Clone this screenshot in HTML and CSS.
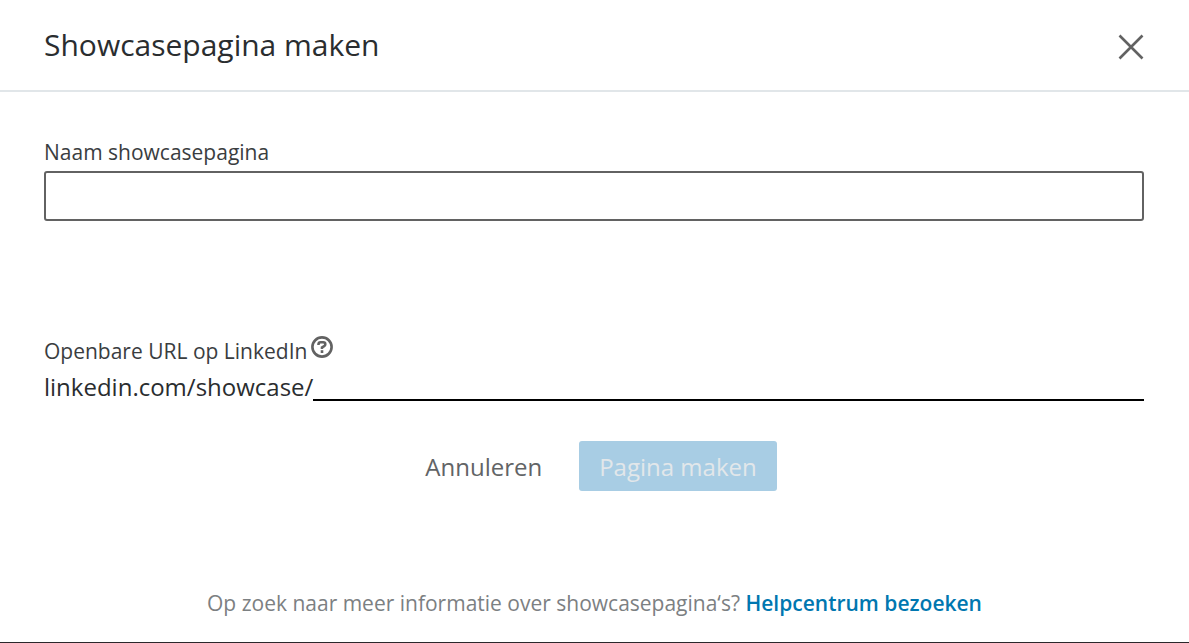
FILE: index.html
```html
<!DOCTYPE html>
<html lang="nl">
<head>
<meta charset="utf-8">
<meta name="viewport" content="width=device-width, initial-scale=1">
<title>Showcasepagina maken</title>
<link rel="stylesheet" href="styles.css">
</head>
<body>
<main class="dialog">
  <header class="dialog-header">
    <h1 class="dialog-title">Showcasepagina maken</h1>
    <button class="close" type="button" aria-label="Sluiten">
      <svg class="close-icon" viewBox="0 0 26 26" aria-hidden="true"><path d="M1.5 1.5 24.5 24.5M24.5 1.5 1.5 24.5"/></svg>
    </button>
  </header>
  <form class="form">
    <label class="label" for="name">Naam showcasepagina</label>
    <input class="name-input" id="name" type="text">
    <div class="url-label">
      <label class="label" for="url">Openbare URL op LinkedIn</label>
      <button class="help" type="button" aria-label="Hulp">
        <svg class="help-icon" viewBox="0 0 22 22" aria-hidden="true"><circle cx="11" cy="11" r="9.6"/><path d="M7.5 9V8.3Q7.5 6.2 9.6 6.2H12.2Q14.3 6.2 14.3 8.2Q14.3 9.5 13.2 10.1L11 11.4V13"/><path d="M11 14.2V17"/></svg>
      </button>
    </div>
    <div class="url-row">
      <label class="url-prefix" for="url">linkedin.com/showcase/</label>
      <input class="url-input" id="url" type="text">
    </div>
    <div class="actions">
      <button class="button" type="button">Annuleren</button>
      <button class="button button-primary" type="submit" disabled>Pagina maken</button>
    </div>
  </form>
  <footer class="footer">Op zoek naar meer informatie over showcasepagina‘s? <a class="footer-link" href="#">Helpcentrum bezoeken</a></footer>
</main>
</body>
</html>
```
FILE: styles.css
```css
* { box-sizing: border-box; }

body {
  margin: 0;
  background: #fff;
  color: #2a2d2f;
  font-family: "Segoe UI", "Open Sans", "Noto Sans", sans-serif;
}

.dialog {
  display: flex;
  flex-direction: column;
  min-height: 100vh;
  border-bottom: 1px solid #2b282b;
}

.dialog-header {
  display: flex;
  align-items: center;
  justify-content: space-between;
  padding: 21px 45px 21px 44px;
  border-bottom: 2px solid #e1e6e9;
}

.dialog-title {
  margin: 0;
  font-size: 30px;
  font-weight: 400;
  line-height: 48px;
}

.close,
.help {
  display: flex;
  padding: 0;
  border: 0;
  background: none;
  cursor: pointer;
}

.close {
  padding-top: 4px;
}

.close-icon {
  width: 26px;
  height: 26px;
  fill: none;
  stroke: #626262;
  stroke-width: 2.6;
}

.form {
  display: flex;
  flex-direction: column;
  padding: 44px 45px 0 44px;
}

.label {
  color: #3a3d3f;
  font-size: 21px;
  line-height: 32px;
}

.name-input {
  width: 100%;
  height: 50px;
  margin-top: 3px;
  padding: 0 12px;
  border: 2px solid #626262;
  border-radius: 3px;
  font: inherit;
  font-size: 24px;
}

.url-label {
  display: flex;
  align-items: flex-start;
  gap: 4px;
  margin-top: 114px;
}

.help {
  padding-top: 1px;
}

.help-icon {
  width: 22px;
  height: 22px;
  fill: none;
  stroke: #626262;
  stroke-width: 2.6;
}

.url-row {
  display: flex;
  height: 34px;
}

.url-prefix {
  font-size: 24px;
  line-height: 40px;
}

.url-input {
  flex: 1;
  min-width: 0;
  padding: 0;
  border: 0;
  border-bottom: 2px solid #000;
  background: none;
  font: inherit;
  font-size: 24px;
}

.actions {
  display: flex;
  justify-content: center;
  gap: 17px;
  margin-top: 40px;
  padding-right: 6px;
}

.button {
  height: 50px;
  padding: 0 20px;
  border: 0;
  border-radius: 3px;
  background: none;
  color: #626466;
  font: inherit;
  font-size: 24px;
  font-weight: 500;
}

.button-primary {
  background: #a8cde4;
  color: #e2e7ea;
}

.footer {
  margin-top: auto;
  padding: 24px 44px 23px;
  color: #7c8082;
  font-size: 21px;
  line-height: 32px;
  text-align: center;
}

.footer-link {
  color: #0077b0;
  font-weight: 600;
  text-decoration: none;
}
```
